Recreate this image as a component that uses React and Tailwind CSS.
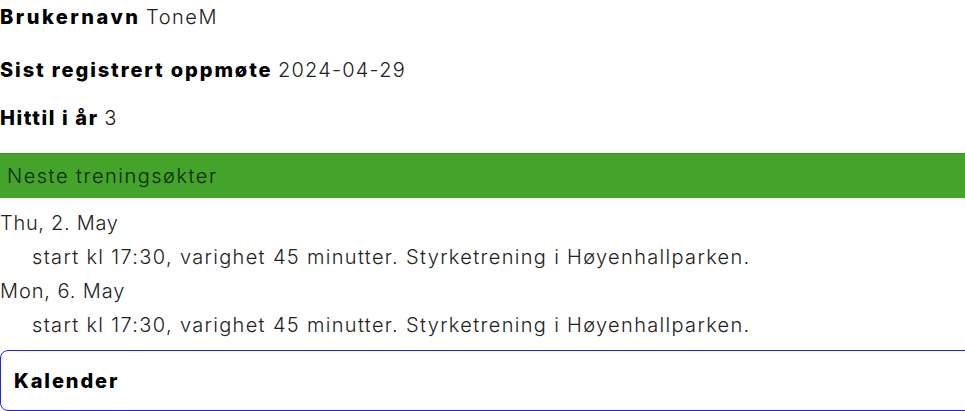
export default function App() {
  const font = { fontFamily: 'Inter, "Open Sans", sans-serif' };
  return (
    <div className="w-full h-[411px] overflow-hidden bg-white text-black" style={font}>
      <div className="flex flex-col text-[20px]">
        <p className="h-[55px] pt-[2px] leading-[30px]"><span className="font-extrabold tracking-[2.5px]">Brukernavn</span> <span className="font-light text-[#222] tracking-[1.5px]">ToneM</span></p>
        <p className="h-[48px] leading-[30px]"><span className="font-extrabold tracking-[1.9px]">Sist registrert oppmøte</span> <span className="font-light text-[#222] tracking-[1.2px]">2024-04-29</span></p>
        <p className="h-[48px] leading-[30px]"><span className="font-extrabold tracking-[1.6px]">Hittil i år</span> <span className="font-light text-[#111]">3</span></p>
        <div className="mt-[2px] h-[45px] bg-[#43a32a] border-t border-[#399a20] flex items-center px-[7px] font-light text-[#0d2a06] tracking-[1.5px]">Neste treningsøkter</div>
        <div className="pt-[8px] font-light text-[#222] leading-[34px] tracking-[1.33px]">
          <div className="tracking-[0.7px]">Thu, 2. May</div>
          <div className="pl-[32px]">start kl 17:30, varighet 45 minutter. Styrketrening i Høyenhallparken.</div>
          <div className="tracking-[0.9px]">Mon, 6. May</div>
          <div className="pl-[32px]">start kl 17:30, varighet 45 minutter. Styrketrening i Høyenhallparken.</div>
        </div>
        <div className="mt-[8px] mr-[-12px] h-[61px] border border-[#2323f5] rounded-[8px] flex items-center px-[13px]">
          <span className="font-extrabold tracking-[1.9px]">Kalender</span>
        </div>
      </div>
    </div>
  );
}
